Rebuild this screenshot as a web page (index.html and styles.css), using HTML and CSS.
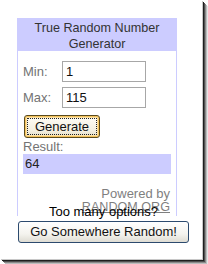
FILE: index.html
```html
<!DOCTYPE html>
<html>
<head>
<meta charset="utf-8">
<link rel="stylesheet" href="styles.css">
</head>
<body>
<div class="shot">
  <div class="widget">
    <div class="head">True Random Number<br>Generator</div>
    <div class="form">
      <div class="grid">
        <span class="lbl">Min:</span>
        <span class="inp">1</span>
        <span class="lbl">Max:</span>
        <span class="inp">115</span>
      </div>
      <div class="gen"><span class="focus">Generate</span></div>
      <div class="lbl res-lbl">Result:</div>
      <div class="res">64</div>
      <div class="powered">Powered by<br><span class="link">RANDOM.ORG</span></div>
    </div>
  </div>
  <div class="more">
    <div class="more-text">Too many options?</div>
    <div class="go">Go Somewhere Random!</div>
  </div>
</div>
</body>
</html>
```
FILE: styles.css
```css
html, body {
  margin: 0;
  padding: 0;
  background: #ffffff;
}
body {
  width: 208px;
  height: 264px;
  overflow: hidden;
  font-family: "Liberation Sans", Arial, sans-serif;
  font-size: 13px;
}
.shot {
  width: 202px;
  height: 259px;
  background: #ffffff;
  box-shadow: 1px 1px 0 #c8c8c8, 2px 2px 0 #1e1e1e, 3px 3px 0 #505050, 4px 4px 0 #8a8a8a, 5px 5px 0 #bdbdbd, 6px 6px 0 #e6e6e6;
  padding-top: 18px;
  box-sizing: border-box;
}
.widget {
  margin-left: 17px;
  width: 160px;
  height: 198px;
  box-sizing: border-box;
  border: 1px solid #ccccff;
  border-bottom: none;
  overflow: hidden;
}
.head {
  height: 32px;
  box-sizing: border-box;
  padding-top: 1px;
  background: #ccccff;
  color: #333333;
  text-align: center;
  font-size: 12.6px;
  line-height: 16px;
}
.form {
  padding: 10px 0 0 5px;
}
.grid {
  display: grid;
  grid-template-columns: 39px 84px;
  grid-auto-rows: 21px;
  row-gap: 5px;
  align-items: center;
}
.lbl {
  color: #737373;
  line-height: 15px;
}
.inp {
  display: block;
  height: 21px;
  box-sizing: border-box;
  border: 1px solid #a7a7a7;
  padding-left: 3px;
  line-height: 19px;
  color: #111111;
}
.gen {
  margin: 7px 0 0 1px;
  width: 76px;
  height: 23px;
  box-sizing: border-box;
  border: 1px solid #5a4a1e;
  border-radius: 3px;
  background: linear-gradient(#fffdf6, #f3efe0 70%, #e2dcc6);
  box-shadow: inset 0 0 0 1px #f4c35c, inset 0 0 0 2px #fbe2a8;
  padding: 2px;
  display: flex;
}
.focus {
  flex: 1;
  border: 1px dotted #222222;
  text-align: center;
  line-height: 15px;
  color: #111111;
}
.res-lbl {
  margin-top: 1px;
}
.res {
  width: 148px;
  height: 20px;
  box-sizing: border-box;
  background: #ccccff;
  padding-left: 2px;
  line-height: 19px;
  color: #222222;
}
.powered {
  margin-top: 13px;
  padding-right: 6px;
  text-align: right;
  color: #7f7f7f;
  line-height: 13px;
}
.link {
  text-decoration: underline;
  font-size: 12.6px;
}
.more {
  width: 207px;
  margin-top: -12px;
  text-align: center;
  position: relative;
}
.more-text {
  color: #000000;
  line-height: 15px;
}
.go {
  margin: 2px auto 0;
  width: 171px;
  height: 22px;
  box-sizing: border-box;
  border: 1px solid #2c4a6e;
  border-radius: 3px;
  background: linear-gradient(#ffffff, #f4f3ee 60%, #dedcd3);
  line-height: 20px;
  color: #111111;
}
```
